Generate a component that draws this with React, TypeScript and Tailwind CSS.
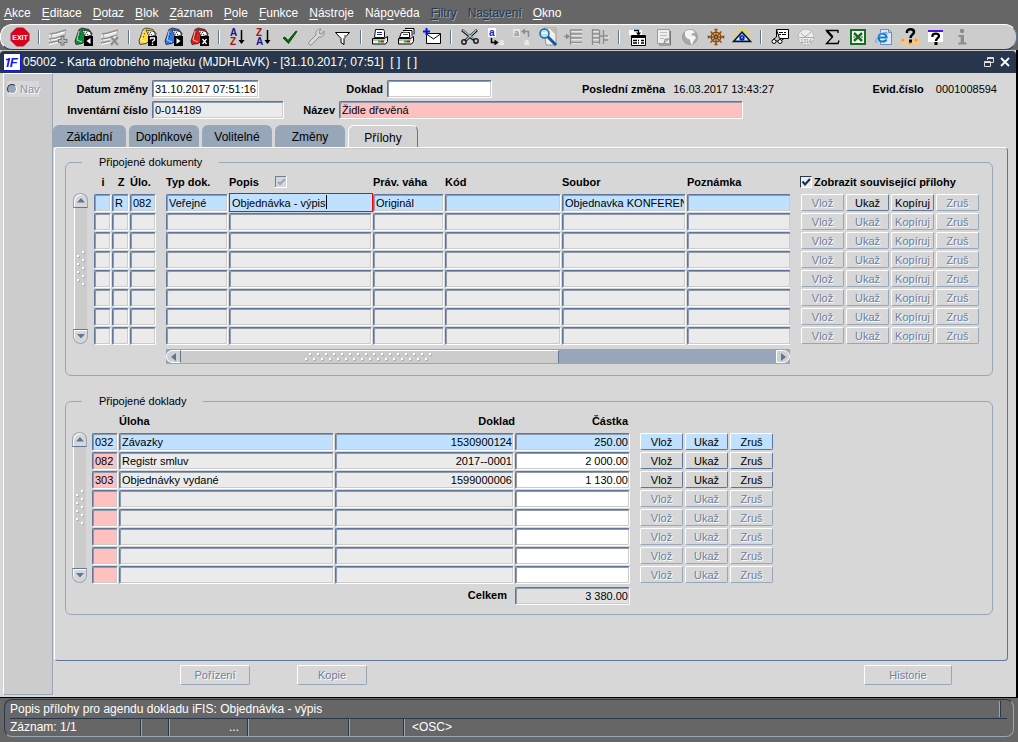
import React from "react";
import clsx from "clsx";

const MENU = [
  { pre: "", key: "A", post: "kce" },
  { pre: "", key: "E", post: "ditace" },
  { pre: "", key: "D", post: "otaz" },
  { pre: "", key: "B", post: "lok" },
  { pre: "", key: "Z", post: "áznam" },
  { pre: "", key: "P", post: "ole" },
  { pre: "", key: "F", post: "unkce" },
  { pre: "", key: "N", post: "ástroje" },
  { pre: "Náp", key: "o", post: "věda" },
  { pre: "", key: "F", post: "iltry", disabled: true },
  { pre: "Na", key: "s", post: "tavení", disabled: true },
  { pre: "", key: "O", post: "kno" },
];

const TABS = ["Základní", "Doplňkové", "Volitelné", "Změny", "Přílohy"];

const DOC_COLUMNS = ["i", "Z", "Úlo.", "Typ dok.", "Popis", "Práv. váha", "Kód", "Soubor", "Poznámka"];
const DOC_ACTIONS = ["Vlož", "Ukaž", "Kopíruj", "Zruš"];
const DOC_ROW = ["", "R", "082", "Veřejné", "Objednávka - výpis", "Originál", "", "Objednavka KONFERENCE", ""];

const RECORD_ACTIONS = ["Vlož", "Ukaž", "Zruš"];
const RECORDS = [
  ["032", "Závazky", "1530900124", "250.00"],
  ["082", "Registr smluv", "2017--0001", "2 000.00"],
  ["303", "Objednávky vydané", "1599000006", "1 130.00"],
];

const EIGHT = [0, 1, 2, 3, 4, 5, 6, 7];

/* ---------- toolbar icons ---------- */

function Svg({ children }: { children: React.ReactNode }) {
  return (
    <svg width="20" height="20" viewBox="0 0 20 20" fill="none" aria-hidden="true">
      {children}
    </svg>
  );
}

function ExitIcon() {
  return (
    <Svg>
      <path d="M6.500 1h7L19 6.500v7L13.500 19h-7L1 13.500v-7z" fill="#d8001c" stroke="#c01028" />
      <text x="10" y="13" textAnchor="middle" fontSize="7" fontWeight="bold" fill="#fff" fontFamily="Liberation Sans">
        EXIT
      </text>
    </Svg>
  );
}

function TrayIcon({ remove }: { remove?: boolean }) {
  return (
    <Svg>
      <path d="m1 8 17-4v5L1 13z" fill="#e4e4e4" />
      <path d="m2 7 6-1 10-3M1 12l7-1 9-3M1 16l9-2" stroke="#8f8f8f" strokeWidth="1.500" />
      <path d="m2 8.500 6-1 10-3M1 13.500l7-1 8-3M1 17.500l9-2" stroke="#fff" />
      <path d="M4 7 2 16M17.500 3.500 17 9" stroke="#a8a8a8" />
      {remove ? (
        <path d="m11 10 7 8m0-8-7 8" stroke="#8c8c8c" strokeWidth="2" />
      ) : (
        <g>
          <path d="M14.500 9v9.500M10 14h9.500" stroke="#777" strokeWidth="4" />
          <path d="M14.500 10v7.500M11 14h7.500" stroke="#b4b4b4" strokeWidth="2" />
        </g>
      )}
    </Svg>
  );
}

function CardIcon({ color, sign }: { color: string; sign: "left" | "right" | "help" | "cross" }) {
  return (
    <Svg>
      <path d="M1 14 5 2.500 8 1l7 1.500 3 4-1 4-9 6-6 1z" fill={color} stroke="#222" strokeWidth=".8" />
      <path d="m8 3 8 1.500L17.500 8l-6 2z" fill="#fff" stroke="#222" strokeWidth=".8" />
      <path d="m10 5 4 1M11 7l4 1M4 6l3 1M3 9l3 1" stroke="#222" strokeDasharray="1 1" />
      <path d="M5 4 3 13l5 2" stroke="#fff" strokeWidth=".7" />
      <path d="M10 9h9v10h-9z" fill="#000" />
      {sign === "left" && <path d="M16.500 11v6L12.500 14z" fill="#fff" />}
      {sign === "right" && <path d="M12.500 11v6l4-3z" fill="#fff" />}
      {sign === "cross" && <path d="m12.500 12 4 5m0-5-4 5" stroke="#fff" strokeWidth="1.300" />}
      {sign === "help" && <path d="M12.500 12.500v-1.500h4v2l-2 1.500v1m0 1v1.500" stroke="#fff" strokeWidth="1.300" />}
    </Svg>
  );
}

function SortIcon({ top, bottom }: { top: string; bottom: string }) {
  return (
    <Svg>
      <text x="2" y="9" fontSize="10" fontWeight="bold" fill={top === "A" ? "#141496" : "#a01414"} fontFamily="Liberation Sans">
        {top}
      </text>
      <text x="2" y="18" fontSize="10" fontWeight="bold" fill={top === "A" ? "#a01414" : "#141496"} fontFamily="Liberation Sans">
        {bottom}
      </text>
      <path d="M13.500 3v13" stroke="#000" strokeWidth="1.500" />
      <path d="M10.500 13h6l-3 4z" fill="#000" />
    </Svg>
  );
}

function CheckIcon() {
  return (
    <Svg>
      <path d="m3 11 2-1 3 3.500L16 4l1 .5L8.500 16.500z" fill="#0a6a14" stroke="#0a5010" />
    </Svg>
  );
}

function WrenchIcon() {
  return (
    <Svg>
      <path
        d="m3 15 7-7c-1-3 1-6 5-6l-2 3 1 2 2 0 2-3c1 4-2 7-5 6l-7 7.500c-1.500 1.500-4.500-1-3-2.500z"
        fill="#d8d8d8"
        stroke="#8e8e8e"
      />
    </Svg>
  );
}

function FunnelIcon() {
  return (
    <Svg>
      <path d="M3.500 5.500h14l-5.500 6v6l-3-2v-4z" fill="#fff" stroke="#000" />
      <path d="M12 8h3l-3 3z" fill="#999" />
    </Svg>
  );
}

function PrinterIcon({ stack }: { stack?: boolean }) {
  return (
    <Svg>
      {stack && <path d="M9 1.500h9v6M7 3.500h9v5" fill="#fff" stroke="#000" />}
      {stack ? (
        <path d="M5.500 5.500h8v5h-10z" fill="#fff" stroke="#000" />
      ) : (
        <path d="M5.500 2.500h8l1 2v6h-10z" fill="#fff" stroke="#111" />
      )}
      <path d="M7 5.500h5M7 7.500h5" stroke={stack ? "#555" : "#2222aa"} />
      <path d="M2.500 11.500h12l3-2v5l-2 2.500h-13z" fill="#eee" stroke="#000" />
      <path d="M3 12h12v2H3z" fill="#bbb" />
      <path d="M8 14.500h3" stroke="#19c019" strokeWidth="2" />
      <path d="M11 14.500h3" stroke="#e01010" strokeWidth="2" />
    </Svg>
  );
}

function MailIcon() {
  return (
    <Svg>
      <path d="M4.500 6.500h14v10h-14z" fill="#fff" stroke="#000" />
      <path d="m4.500 7 7 5 7-5" stroke="#000" />
      <path d="M4.500 1v7M1 4.500h7" stroke="#0a14e0" strokeWidth="2" />
    </Svg>
  );
}

function CutIcon() {
  return (
    <Svg>
      <path d="m2 3 12 10M17 3 5 14" stroke="#000" strokeWidth="2.500" />
      <path d="m2.500 3 11 9M16.500 3 6 13" stroke="#a9cccc" strokeWidth="1.200" />
      <circle cx="4" cy="15" r="2.200" stroke="#222" strokeWidth="1.500" />
      <circle cx="16" cy="14" r="2.200" stroke="#222" strokeWidth="1.500" />
    </Svg>
  );
}

function CopyIcon() {
  return (
    <Svg>
      <path d="M2 1h8v9H2z" fill="#fff" />
      <text x="3" y="9" fontSize="10" fontWeight="bold" fill="#1420c8" fontFamily="Liberation Sans">
        a
      </text>
      <path d="M5.500 11v4.500H9" stroke="#000" strokeWidth="1.500" />
      <path d="m8.500 12.500 4 3-4 3z" fill="#000" />
      <text x="13" y="18" fontSize="9" fontWeight="bold" fill="#f4f4f4" fontFamily="Liberation Sans">
        a
      </text>
    </Svg>
  );
}

function PasteIcon() {
  return (
    <Svg>
      <path d="M1 2h7v8H1z" fill="#e6e6e6" />
      <text x="2" y="9" fontSize="9" fontWeight="bold" fill="#8c8c8c" fontFamily="Liberation Sans">
        a
      </text>
      <path d="M16.500 10V4.500H13" stroke="#8c8c8c" strokeWidth="1.500" />
      <path d="m13 1.500-4 3 4 3z" fill="#8c8c8c" />
      <text x="12" y="18" fontSize="9" fontWeight="bold" fill="#f4f4f4" fontFamily="Liberation Sans">
        a
      </text>
    </Svg>
  );
}

function FindIcon() {
  return (
    <Svg>
      <path d="M6 1h12v17H8z" fill="#eee" stroke="#999" />
      <path d="M12 2h6v6z" fill="#c8bb90" />
      <path d="m9 9 9 9" stroke="#1756a5" strokeWidth="3" />
      <circle cx="6.500" cy="6.500" r="4.500" fill="#9fe8f4" stroke="#35609a" strokeWidth="1.500" />
      <path d="M4 6h5" stroke="#fff" strokeWidth="1.500" />
    </Svg>
  );
}

function IndentIcon() {
  return (
    <Svg>
      <path d="M7 4h11M7 8h11M7 12h11M7 16.500h11" stroke="#fff" />
      <path d="M6.500 2.500v15M7 3h11M7 7h11M7 11h11M7 15.500h11M0 9.500h3" stroke="#8c8c8c" strokeWidth="1.300" />
      <path d="m2 6.500 4 3-4 3z" fill="#8c8c8c" />
    </Svg>
  );
}

function TreeIcon() {
  return (
    <Svg>
      <path d="M3 4h6M3 8h6M3 12h6M3 16.500h6M13 10h6" stroke="#fff" />
      <path
        d="M2.500 2v16M3 3h6M3 7h6M3 11h6M3 15.500h6M9.500 3v14M13.500 3v14M9 9h9M14 13h4"
        stroke="#8c8c8c"
        strokeWidth="1.300"
      />
    </Svg>
  );
}

function CalendarIcon() {
  return (
    <Svg>
      <path d="M1 2h13v6H1z" fill="#fff" />
      <path d="M1 2h13" stroke="#a9d5f5" strokeWidth="2" />
      <path d="M3.500 8.500h14v10h-14z" fill="#fff" stroke="#000" />
      <path d="M4 9h13v2H4z" fill="#000" />
      <path d="M5 13.500h4m1 0h1m2 0h3M5 16h4m1 0h1m2 0h3" stroke="#000" strokeWidth="1.400" />
      <path d="M6 3.500h4.500V7" stroke="#000" strokeWidth="1.300" />
      <path d="M8 5.500h5L10.500 9z" fill="#000" />
    </Svg>
  );
}

function NoteIcon() {
  return (
    <Svg>
      <path d="M3.500 2.500h12v14h-12z" fill="#eee" stroke="#9a9a9a" />
      <path d="M6 5.500h7M6 8.500h7M6 11.500h4" stroke="#bdbdbd" />
      <path d="m10 16 1-4h4z" fill="#ccc" stroke="#888" strokeWidth=".8" />
      <path d="M16.500 4v14H5" stroke="#777" />
    </Svg>
  );
}

function GlobeIcon() {
  return (
    <Svg>
      <circle cx="10" cy="10" r="7.500" fill="#a8a8a8" stroke="#9a9a9a" />
      <path d="M5 4.500c3-2 6-2 8-1l2 2-3 1-1 2 3 0 2 2-2 3-2 4h-1l-1-5-3-1-2-3z" fill="#f4f4f4" />
    </Svg>
  );
}

function WheelIcon() {
  return (
    <Svg>
      <path d="M10 2v16M2 10h16M4.500 4.500l11 11M15.500 4.500l-11 11" stroke="#8a4a08" strokeWidth="1.300" />
      <circle cx="10" cy="10" r="4.800" stroke="#8a4a08" strokeWidth="1.500" />
      <circle cx="10" cy="10" r="1.500" fill="#cda25a" stroke="#6c3600" />
      <path d="M8.500 2.500h3m-3 15h3m-9-9v3m15-3v3" stroke="#8a4a08" strokeWidth="1.500" />
    </Svg>
  );
}

function EyeIcon() {
  return (
    <Svg>
      <path d="M10 2v2M5 3l1 2M15 3l-1 2M2 7l2 1M18 7l-2 1M8 2l.5 2M12 2l-.5 2" stroke="#f2dc00" strokeWidth="1.300" />
      <path d="m10 5 8.500 9.500h-17z" fill="#8ab4d8" stroke="#111" strokeWidth="1.500" />
      <path d="M4.500 13c2-5 9-5 11 0z" fill="#c8f0ff" />
      <circle cx="10" cy="11" r="2.700" fill="#0a18d0" />
      <circle cx="10" cy="10.500" r="1" fill="#4ce0f0" />
    </Svg>
  );
}

function ReportIcon() {
  return (
    <Svg>
      <path d="M6.500 2.500h12v9h-9z" fill="#fff" stroke="#000" />
      <path d="M9 5.500h4m1 0h2M9 7.500h2m1 0h4" stroke="#000" />
      <path d="M6.500 3v7L2.500 13" stroke="#000" />
      <circle cx="4" cy="14.500" r="2" fill="#fff" stroke="#000" />
      <circle cx="10" cy="14.500" r="2" fill="#fff" stroke="#000" />
      <path d="M6 14h2M12 13l2-1.500" stroke="#000" />
    </Svg>
  );
}

function ClockIcon() {
  return (
    <Svg>
      <circle cx="10" cy="10" r="7.800" fill="#ececec" stroke="#aaa" strokeDasharray="2 1" />
      <path d="m5 6 4 4 6-5M3 10.500h14" stroke="#aaa" />
      <text x="10" y="15.500" textAnchor="middle" fontSize="5" fill="#888" fontFamily="Liberation Sans">
        1314
      </text>
    </Svg>
  );
}

function SigmaIcon() {
  return (
    <Svg>
      <path d="M16 6V3.500H4.500L10.500 10l-6 6.500H16l1-3" stroke="#000" strokeWidth="1.300" />
      <path d="m5 4 5.500 6" stroke="#000" strokeWidth="2.500" />
    </Svg>
  );
}

function SheetIcon() {
  return (
    <Svg>
      <path d="M3 3h14v14H3z" fill="#fff" stroke="#14701c" strokeWidth="2" />
      <path d="m6 6 8 8m0-8-8 8" stroke="#14701c" strokeWidth="2.500" />
      <path d="M5 10h2m6 0h2" stroke="#14701c" />
    </Svg>
  );
}

function BrowserIcon() {
  return (
    <Svg>
      <path d="M6.500 2.500h8l3 3v12h-11z" fill="#dce9fa" stroke="#6a8cc0" />
      <path d="M14.500 2.500v3h3" stroke="#6a8cc0" />
      <circle cx="8" cy="10.500" r="5" fill="#e8f4ff" />
      <path d="M12.500 12.500c-1.500 3-8 3-8-2 0-5 8-5 8 0h-7" stroke="#1c78cc" strokeWidth="2.200" />
      <path d="M3 15c-3 2-1-4 3-7s8-4 7-1" stroke="#4fa3e4" />
    </Svg>
  );
}

function HelpGroupIcon() {
  return (
    <Svg>
      <path d="M1 11h5v7H1zM7.500 13h5v5h-5zM14 11h5v7h-5z" fill="#f6c987" />
      <circle cx="3" cy="13" r="1.500" fill="#f09a20" />
      <circle cx="10" cy="16" r="1.500" fill="#f09a20" />
      <circle cx="16" cy="13" r="1.500" fill="#f09a20" />
      <path d="M7 6V4.500C7 1.500 14 1.500 14 5c0 2.500-3.500 3-3.500 6" stroke="#000" strokeWidth="2.500" />
      <path d="M9 12.500h3v3H9z" fill="#000" />
    </Svg>
  );
}

function HelpWindowIcon() {
  return (
    <Svg>
      <path d="M2 3h15v12H2z" fill="#fff" />
      <path d="M2 3h15v2H2z" fill="#4a14e8" />
      <path d="M6.500 10V8.500C6.500 6 13 6 13 9c0 2-3 2.500-3 5" stroke="#000" strokeWidth="2.300" />
      <path d="M8.500 15h3v3h-3z" fill="#000" />
    </Svg>
  );
}

function InfoIcon() {
  return (
    <Svg>
      <circle cx="10" cy="4" r="2.200" fill="#8c8c8c" />
      <path d="M6.500 8H12v7.500h2.500V17.500h-8v-2h2.200V10H6.500z" fill="#8c8c8c" />
    </Svg>
  );
}

const TOOLS: { label: string; icon: React.ReactNode }[][] = [
  [{ label: "Konec", icon: <ExitIcon /> }],
  [
    { label: "Vložit záznam", icon: <TrayIcon /> },
    { label: "Uložit", icon: <CardIcon color="#0c8a3c" sign="left" /> },
    { label: "Smazat záznam", icon: <TrayIcon remove /> },
  ],
  [
    { label: "Zadat dotaz", icon: <CardIcon color="#ffd83c" sign="help" /> },
    { label: "Provést dotaz", icon: <CardIcon color="#2c78e8" sign="right" /> },
    { label: "Zrušit dotaz", icon: <CardIcon color="#e01c1c" sign="cross" /> },
  ],
  [
    { label: "Seřadit vzestupně", icon: <SortIcon top="A" bottom="Z" /> },
    { label: "Seřadit sestupně", icon: <SortIcon top="Z" bottom="A" /> },
    { label: "Potvrdit", icon: <CheckIcon /> },
    { label: "Nastavení", icon: <WrenchIcon /> },
    { label: "Filtr", icon: <FunnelIcon /> },
  ],
  [
    { label: "Tisk", icon: <PrinterIcon /> },
    { label: "Tisk sestav", icon: <PrinterIcon stack /> },
    { label: "Odeslat", icon: <MailIcon /> },
  ],
  [
    { label: "Vyjmout", icon: <CutIcon /> },
    { label: "Kopírovat", icon: <CopyIcon /> },
    { label: "Vložit", icon: <PasteIcon /> },
    { label: "Hledat", icon: <FindIcon /> },
    { label: "Rozbalit", icon: <IndentIcon /> },
    { label: "Strom", icon: <TreeIcon /> },
  ],
  [
    { label: "Kalendář", icon: <CalendarIcon /> },
    { label: "Poznámka", icon: <NoteIcon /> },
    { label: "Web", icon: <GlobeIcon /> },
    { label: "Navigace", icon: <WheelIcon /> },
    { label: "Náhled", icon: <EyeIcon /> },
  ],
  [
    { label: "Sestava", icon: <ReportIcon /> },
    { label: "Čas", icon: <ClockIcon /> },
    { label: "Součet", icon: <SigmaIcon /> },
    { label: "Excel", icon: <SheetIcon /> },
    { label: "Prohlížeč", icon: <BrowserIcon /> },
    { label: "Podpora", icon: <HelpGroupIcon /> },
    { label: "Nápověda", icon: <HelpWindowIcon /> },
    { label: "Informace", icon: <InfoIcon /> },
  ],
];

/* ---------- shared controls ---------- */

type FieldProps = {
  label?: string;
  id?: string;
  value: string;
  tone?: "white" | "gray" | "total" | "blue" | "pink";
  align?: "left" | "right";
  open?: boolean;
  className?: string;
};

function Field({ label, id, value, tone = "gray", align = "left", open, className }: FieldProps) {
  return (
    <input
      id={id}
      aria-label={label}
      defaultValue={value}
      className={clsx(
        "block h-[18px] min-w-0 rounded-xs border border-t-[#5f7698] border-l-[#5f7698] border-b-white pl-0.5 pr-px text-[11px] leading-4 text-black shadow-[inset_1px_1px_0_#8b9bb2,inset_-1px_-1px_0_#cccccc] outline-none",
        open ? "rounded-r-none border-r-0" : "border-r-white",
        tone === "white" && "bg-white",
        tone === "gray" && "bg-[#ebebeb]",
        tone === "total" && "bg-[#e1e1e1]",
        tone === "blue" && "bg-[#bfe0ff]",
        tone === "pink" && "bg-[#ffc0c0]",
        align === "right" && "text-right",
        className ?? "w-full",
      )}
    />
  );
}

function PushButton({ children, disabled, blue, className }: { children: string; disabled?: boolean; blue?: boolean; className?: string }) {
  return (
    <button
      disabled={disabled}
      className={clsx(
        "block rounded-xs border border-t-white border-l-white text-center text-[11px] leading-4",
        disabled
          ? "border-r-[#98a6ba] border-b-[#98a6ba] text-[#6b809f] [text-shadow:1px_1px_0_#ffffff]"
          : "border-r-[#5f7698] border-b-[#5f7698] text-black",
        blue && "bg-[#bfe0ff]",
        className ?? "h-[17px] w-[43px]",
      )}
    >
      {children}
    </button>
  );
}

function Grip({ vertical }: { vertical?: boolean }) {
  const dots = [];
  for (let i = 0; i < (vertical ? 9 : 32); i++) {
    const along = i * 4;
    const across = i % 2 === 0 ? 5 : 0;
    dots.push(vertical ? [across, along] : [along, across]);
  }
  return (
    <svg width={vertical ? 8 : 128} height={vertical ? 36 : 8} aria-hidden="true">
      {dots.map(([x, y]) => (
        <g key={`${x}-${y}`}>
          <rect x={x} y={y} width="2" height="2" fill="#fff" />
          <rect x={x + 1} y={y + 1} width="2" height="2" fill="#a3afc0" />
          <rect x={x} y={y} width="2" height="2" fill="#fff" />
        </g>
      ))}
    </svg>
  );
}

function VerticalScroll({ label }: { label: string }) {
  return (
    <div className="flex h-[151px] w-[15px] shrink-0 flex-col">
      <button
        aria-label={`${label} nahoru`}
        className="flex h-[15px] items-center justify-center rounded-t-full border border-[#98a6ba] border-b-[#5f7698] shadow-[inset_1px_1px_0_#ffffff]"
      >
        <svg width="8" height="5" viewBox="0 0 8 5">
          <path d="M4 0 8 4.500H0z" fill="#5f7698" />
        </svg>
      </button>
      <div className="mx-px flex flex-1 items-center justify-center border-l border-white bg-[#cccccc]">
        <Grip vertical />
      </div>
      <button
        aria-label={`${label} dolů`}
        className="flex h-[15px] items-center justify-center rounded-b-full border border-[#98a6ba] border-t-[#5f7698] shadow-[inset_1px_1px_0_#ffffff]"
      >
        <svg width="8" height="5" viewBox="0 0 8 5">
          <path d="M0 0h8L4 4.500z" fill="#5f7698" />
        </svg>
      </button>
    </div>
  );
}

function HorizontalScroll() {
  return (
    <div className="flex h-[15px] bg-[#98a6ba] py-px">
      <button aria-label="Posunout vlevo" className="flex w-[15px] items-center justify-center rounded-l-full border border-white border-r-[#5f7698] bg-[#d0d0d0]">
        <svg width="5" height="8" viewBox="0 0 5 8">
          <path d="M5 0v8L0 4z" fill="#5f7698" />
        </svg>
      </button>
      <div className="flex flex-1">
        <div className="flex w-[63.500%] items-center justify-center border-t border-r border-t-white border-r-[#5f7698] bg-[#cccccc]">
          <Grip />
        </div>
      </div>
      <button aria-label="Posunout vpravo" className="flex w-[14px] items-center justify-center rounded-r-full border border-white bg-[#d0d0d0]">
        <svg width="5" height="8" viewBox="0 0 5 8">
          <path d="M0 0v8l5-4z" fill="#5f7698" />
        </svg>
      </button>
    </div>
  );
}

/* ---------- page sections ---------- */

function MenuBar() {
  return (
    <nav className="flex h-6 items-center gap-[11px] pl-1 text-[12px] text-white">
      {MENU.map((m) => (
        <button
          key={m.pre + m.key + m.post}
          disabled={m.disabled}
          className={clsx("pt-0.5", m.disabled && "text-[#29374d] [text-shadow:1px_1px_0_#98a6ba]")}
        >
          {m.pre}
          <span className="underline underline-offset-2">{m.key}</span>
          {m.post}
        </button>
      ))}
    </nav>
  );
}

function Toolbar() {
  return (
    <div className="mr-px flex h-[26px] items-center rounded-xl border border-t-white border-l-white border-r-[#5f7698] border-b-[#29374d] bg-[#cccccc] pl-1.5">
      {TOOLS.map((group, i) => (
        <div key={i} className="flex items-center">
          {i > 0 && (
            <span className="flex w-3 justify-center">
              <span className="h-3.5 w-0.5 border-r border-l border-r-white border-l-[#5f7698]" />
            </span>
          )}
          {group.map((tool) => (
            <button key={tool.label} aria-label={tool.label} className="flex w-[26px] justify-center">
              {tool.icon}
            </button>
          ))}
        </div>
      ))}
    </div>
  );
}

function TitleBar() {
  return (
    <header className="flex h-[23px] items-center rounded-t-sm border-t border-[#c8c8c8] bg-[#29374d] pr-1.5 pl-[3px] text-[12px] text-white">
      <svg width="18" height="18" viewBox="0 0 18 18" aria-hidden="true">
        <rect x=".5" y=".5" width="17" height="17" fill="#fff" stroke="#1414f0" />
        <text x="9" y="14" textAnchor="middle" fontSize="13" fontWeight="bold" fontStyle="italic" fill="#1414f0" fontFamily="Liberation Sans">
          iF
        </text>
        <path d="M3 6.500h4" stroke="#1414f0" strokeWidth="1.500" />
      </svg>
      <h1 className="ml-0.5 whitespace-pre">05002 - Karta drobného majetku (MJDHLAVK) - [31.10.2017; 07:51]  [ ]  [ ]</h1>
      <button aria-label="Obnovit okno" className="ml-auto">
        <svg width="10" height="10" viewBox="0 0 10 10" fill="none" stroke="#e0e0e0">
          <path d="M3.500 3V.5h6v5H7M3 1.500h7" />
          <path d="M.5 4.500h6v5h-6zM0 5.500h7" />
        </svg>
      </button>
      <button aria-label="Zavřít okno" className="ml-1.5">
        <svg width="10" height="10" viewBox="0 0 10 10">
          <path d="m1 1 8 8M9 1 1 9" stroke="#fff" strokeWidth="1.800" />
        </svg>
      </button>
    </header>
  );
}

function CardHeader() {
  return (
    <div className="flex flex-col gap-[3px] pt-[7px] text-[11px] leading-4">
      <div className="flex items-center gap-1">
        <label htmlFor="changed" className="w-[95px] text-right font-bold">Datum změny</label>
        <Field id="changed" value="31.10.2017 07:51:16" tone="white" className="w-[107px]" />
        <label htmlFor="document" className="w-[120px] text-right font-bold">Doklad</label>
        <Field id="document" value="" tone="white" className="w-[105px]" />
        <span className="ml-[86px] font-bold">Poslední změna</span>
        <span className="ml-1">16.03.2017 13:43:27</span>
        <span className="ml-auto font-bold">Evid.číslo</span>
        <span className="mr-[19px] ml-2">0001008594</span>
      </div>
      <div className="flex items-center gap-1">
        <label htmlFor="inventory" className="w-[95px] text-right font-bold">Inventární číslo</label>
        <Field id="inventory" value="0-014189" className="w-[132px]" />
        <label htmlFor="name" className="w-[47px] text-right font-bold">Název</label>
        <Field id="name" value="Židle dřevěná" tone="pink" className="w-[404px]" />
      </div>
    </div>
  );
}

function Tabs() {
  return (
    <div role="tablist" className="flex gap-[3px] pt-1.5 text-[12px]">
      {TABS.map((tab) => {
        const active = tab === "Přílohy";
        return (
          <button
            key={tab}
            role="tab"
            aria-selected={active}
            className={clsx(
              "w-[70px] pt-0.5 first:w-[73px]",
              active
                ? "-mb-px h-[23px] rounded-t-md border border-b-0 border-t-white border-l-white border-r-[#5f7698] bg-[#d2d2d2]"
                : "h-[22px] rounded-t-md bg-[#98a6ba]",
            )}
          >
            {tab}
          </button>
        );
      })}
    </div>
  );
}

function DocumentsSection() {
  return (
    <fieldset className="rounded-md border border-[#98a6ba] pr-3 pb-[11px] pl-[7px]">
      <legend className="ml-[9px] px-[17px] text-[11px] leading-4">Připojené dokumenty</legend>
      <div className="flex gap-1.5">
        <div className="pt-[23px]">
          <VerticalScroll label="Dokumenty" />
        </div>
        <table className="w-full table-fixed border-collapse">
          <colgroup>
            <col className="w-[18px]" />
            <col className="w-[18px]" />
            <col className="w-[36px]" />
            <col className="w-[63px]" />
            <col />
            <col className="w-[72px]" />
            <col className="w-[117px]" />
            <col className="w-[125px]" />
            <col className="w-[114px]" />
            <col className="w-[45px]" />
            <col className="w-[45px]" />
            <col className="w-[45px]" />
            <col className="w-[44px]" />
          </colgroup>
          <thead>
            <tr className="h-[23px] text-left text-[11px] leading-4">
              {DOC_COLUMNS.map((name, i) => (
                <th key={name} className={clsx("p-0 whitespace-nowrap", i < 2 && "text-center")}>
                  {name === "Popis" ? (
                    <span className="flex items-center gap-4">
                      Popis
                      <svg width="12" height="12" viewBox="0 0 12 12" aria-hidden="true">
                        <path d="M0 0h12v12H0z" fill="#fff" />
                        <path d="M0 0h11v11H0z" fill="#6b7f9c" />
                        <path d="M1 1h10v10H1z" fill="#d7d7d7" />
                        <path d="m3 6 2 2 5-5" fill="none" stroke="#98a6ba" strokeWidth="2" />
                      </svg>
                    </span>
                  ) : (
                    name
                  )}
                </th>
              ))}
              <th colSpan={4} className="p-0">
                <label className="-ml-px flex items-center gap-0.5 whitespace-nowrap">
                  <span className="relative flex">
                    <input
                      type="checkbox"
                      defaultChecked
                      className="size-3 appearance-none border border-t-[#29374d] border-l-[#29374d] border-r-white border-b-white bg-[#ececec]"
                    />
                    <svg className="pointer-events-none absolute inset-0" width="12" height="12" viewBox="0 0 12 12">
                      <path d="m2.500 5.500 2.500 3 5-5.500" fill="none" stroke="#1c2c48" strokeWidth="2" />
                    </svg>
                  </span>
                  Zobrazit související přílohy
                </label>
              </th>
            </tr>
          </thead>
          <tbody>
            {EIGHT.map((row) => (
              <tr key={row} className="h-[19px]">
                {DOC_COLUMNS.map((name, i) => {
                  const editing = row === 0 && name === "Popis";
                  return (
                    <td key={name} className={clsx("p-0", i === 2 ? "pr-[10px]" : i === 8 ? "pr-[11px]" : !editing && "pr-px")}>
                      {editing ? (
                        <div className="relative border border-[#ff0000]">
                          <input
                            aria-label="Popis 1"
                            defaultValue={DOC_ROW[i]}
                            className="block h-[17px] w-full bg-[#bfe0ff] pl-0.5 text-[11px] leading-4 outline-none"
                          />
                          <span className="absolute top-px left-24 h-3.5 w-px bg-black" />
                        </div>
                      ) : (
                        <Field
                          label={`${name} ${row + 1}`}
                          value={row === 0 ? DOC_ROW[i] : ""}
                          tone={row === 0 ? "blue" : "gray"}
                          open={i === 8}
                        />
                      )}
                    </td>
                  );
                })}
                {DOC_ACTIONS.map((action) => (
                  <td key={action} className="p-0">
                    <PushButton disabled={row > 0 || action === "Vlož" || action === "Zruš"}>{action}</PushButton>
                  </td>
                ))}
              </tr>
            ))}
          </tbody>
          <tfoot>
            <tr>
              <td colSpan={3} />
              <td colSpan={6} className="p-0 pt-1 pr-[11px]">
                <HorizontalScroll />
              </td>
              <td colSpan={4} />
            </tr>
          </tfoot>
        </table>
      </div>
    </fieldset>
  );
}

function RecordsSection() {
  return (
    <fieldset className="mt-[17px] rounded-md border border-[#98a6ba] pr-3 pb-[9px] pl-1.5">
      <legend className="ml-[10px] px-[17px] text-[11px] leading-4">Připojené doklady</legend>
      <div className="flex gap-[5px] pr-[207px]">
        <div className="pt-[23px]">
          <VerticalScroll label="Doklady" />
        </div>
        <table className="w-full table-fixed border-collapse">
          <colgroup>
            <col className="w-[27px]" />
            <col />
            <col className="w-[180px]" />
            <col className="w-[125px]" />
            <col className="w-[45px]" />
            <col className="w-[45px]" />
            <col className="w-[43px]" />
          </colgroup>
          <thead>
            <tr className="h-[23px] text-[11px] leading-4">
              <td className="p-0" />
              <th className="p-0 text-left">Úloha</th>
              <th className="p-0 text-right">Doklad</th>
              <th className="p-0 pr-3 text-right">Částka</th>
              <td colSpan={3} className="p-0" />
            </tr>
          </thead>
          <tbody>
            {EIGHT.map((row) => {
              const [code, task, doc, amount] = RECORDS[row] ?? ["", "", "", ""];
              const current = row === 0;
              return (
                <tr key={row} className="h-[19px]">
                  <td className="p-0 pr-px">
                    <Field label={`Kód úlohy ${row + 1}`} value={code} tone={current ? "blue" : "pink"} />
                  </td>
                  <td className="p-0 pr-px">
                    <Field label={`Úloha ${row + 1}`} value={task} tone={current ? "blue" : "gray"} />
                  </td>
                  <td className="p-0 pr-px">
                    <Field label={`Doklad ${row + 1}`} value={doc} tone={current ? "blue" : "gray"} align="right" />
                  </td>
                  <td className="p-0 pr-[10px]">
                    <Field label={`Částka ${row + 1}`} value={amount} tone={current ? "blue" : "white"} align="right" />
                  </td>
                  {RECORD_ACTIONS.map((action) => (
                    <td key={action} className="p-0">
                      <PushButton disabled={row >= RECORDS.length} blue={current}>{action}</PushButton>
                    </td>
                  ))}
                </tr>
              );
            })}
          </tbody>
          <tfoot>
            <tr className="h-[21px] text-[11px]">
              <td colSpan={2} className="p-0" />
              <th className="p-0 pt-0.5 pr-2 text-right">
                <label htmlFor="total">Celkem</label>
              </th>
              <td className="p-0 pt-0.5 pr-[10px]">
                <Field id="total" value="3 380.00" tone="total" align="right" />
              </td>
              <td colSpan={3} className="p-0" />
            </tr>
          </tfoot>
        </table>
      </div>
    </fieldset>
  );
}

function StatusBar() {
  return (
    <footer className="mx-1 mt-px mb-[5px] flex h-[38px] flex-col rounded-lg border border-t-[#29374d] border-l-[#29374d] border-r-[#98a6ba] border-b-[#98a6ba] pr-1.5 pl-[5px] text-[12px] leading-4 text-white">
      <div className="flex h-[19px] items-center border-b border-[#29374d]">
        <span>Popis přílohy pro agendu dokladu iFIS: Objednávka - výpis</span>
        <span className="mr-1.5 ml-auto h-4 w-0.5 border-r border-l border-r-[#29374d] border-l-[#98a6ba]" />
      </div>
      <div className="flex h-[17px] items-stretch">
        <span className="w-[131px] border-r border-[#29374d]">Záznam: 1/1</span>
        <span className="w-7 border-r border-l border-r-[#29374d] border-l-[#98a6ba]" />
        <span className="w-[79px] border-r border-l border-r-[#29374d] border-l-[#98a6ba] pr-2 text-right">...</span>
        <span className="w-[101px] border-r border-l border-r-[#29374d] border-l-[#98a6ba]" />
        <span className="w-[55px] border-r border-l border-r-[#29374d] border-l-[#98a6ba]" />
        <span className="border-l border-[#98a6ba] pl-[7px]">&lt;OSC&gt;</span>
      </div>
    </footer>
  );
}

export default function App() {
  return (
    <div className="flex min-h-screen flex-col bg-[#666666] font-['Liberation_Sans',Arial,sans-serif] text-black">
      <MenuBar />
      <Toolbar />
      <div className="flex flex-1 flex-col border-r-2 border-b border-black bg-[#d7d7d7]">
        <TitleBar />
        <div className="flex flex-1 pb-0.5">
          <aside className="ml-[3px] w-[50px] shrink-0 border border-t-white border-l-white border-r-[#98a6ba] border-b-[#98a6ba] bg-[#cccccc] pt-[7px] pl-[3px]">
            <label className="flex h-4 w-8 items-center gap-[3px] bg-[#d7d7d7] text-[11px] text-[#8495ad] [text-shadow:1px_1px_0_#ffffff]">
              <input
                type="radio"
                disabled
                className="size-2.5 shrink-0 appearance-none rounded-full border border-t-[#29374d] border-l-[#29374d] border-r-white border-b-white bg-[#98a6ba]"
              />
              Nav
            </label>
          </aside>
          <main className="flex min-w-0 flex-1 flex-col">
            <CardHeader />
            <Tabs />
            <div className="mr-2 ml-px flex-1 rounded-sm border border-t-white border-l-white border-r-[#5f7698] border-b-[#5f7698] pt-1.5 pr-3.5 pb-10 pl-2.5 shadow-[inset_0_1px_0_#cccccc]">
              <DocumentsSection />
              <RecordsSection />
            </div>
            <div className="flex pt-1 pr-16 pb-2.5 pl-[127px]">
              <PushButton disabled className="h-[20px] w-[70px]">Pořízení</PushButton>
              <PushButton disabled className="ml-[47px] h-[20px] w-[70px]">Kopie</PushButton>
              <PushButton disabled className="ml-auto h-[20px] w-[88px]">Historie</PushButton>
            </div>
          </main>
        </div>
      </div>
      <StatusBar />
    </div>
  );
}
